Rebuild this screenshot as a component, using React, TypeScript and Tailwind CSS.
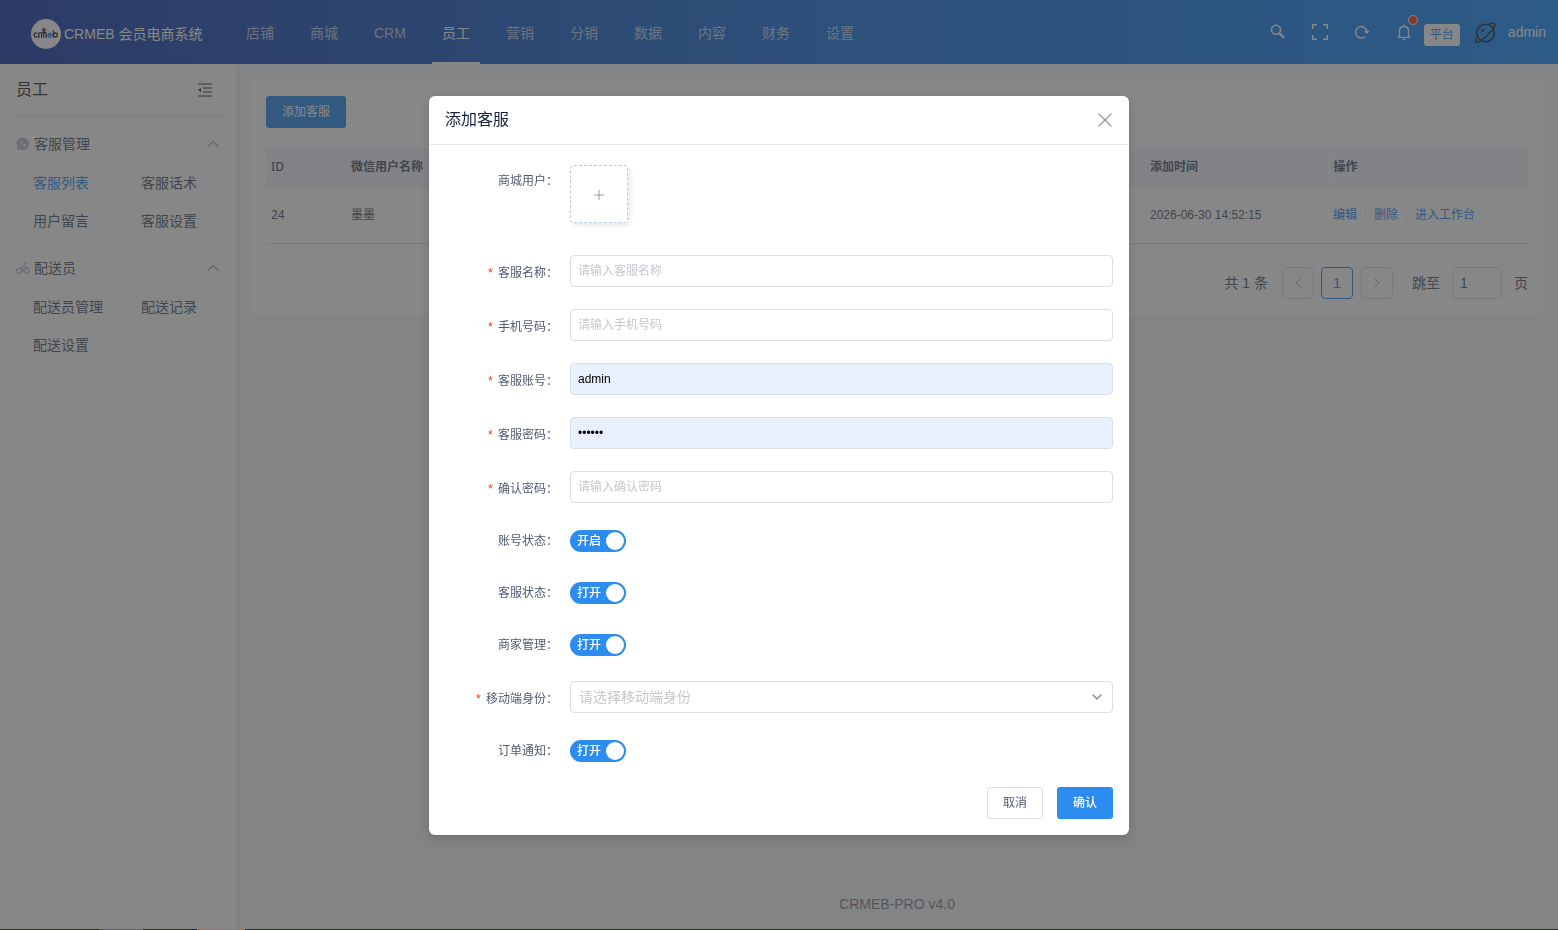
import React, { useState } from 'react';
import { ChevronDown, ChevronLeft, ChevronRight, ChevronUp, Plus, X } from 'lucide-react';

const navItems = ['店铺', '商城', 'CRM', '员工', '营销', '分销', '数据', '内容', '财务', '设置'];

const menuGroups = [
  { title: '客服管理', icon: 'phone', items: ['客服列表', '客服话术', '用户留言', '客服设置'] },
  { title: '配送员', icon: 'bike', items: ['配送员管理', '配送记录', '配送设置'] },
];

function Logo() {
  return (
    <svg width="30" height="30" viewBox="0 0 30 30" fill="none" strokeWidth="1.3" strokeLinecap="round">
      <circle cx="15" cy="15" r="15" fill="#fff" />
      <g stroke="#222">
        <path d="M6 14.2a2 2 0 1 0 0 3.4" />
        <path d="M7.8 18.4v-3.2c0-1.2.7-1.7 1.6-1.6" />
        <path d="M10.6 18.4v-3.6c0-1.8 2.2-1.8 2.2 0v3.6v-3.6c0-1.8 2.4-1.8 2.4 0v3.6" />
        <path d="M22.4 11.8v6.2" />
        <circle cx="24.4" cy="16" r="2" />
      </g>
      <circle cx="12.9" cy="11" r="1.2" stroke="#222" />
      <path d="M17 16h3.8a1.9 1.9 0 1 0-.7 1.7" stroke="#1890ff" strokeWidth="1.5" />
    </svg>
  );
}

function GroupIcon({ name }: { name: string }) {
  if (name === 'phone') {
    return (
      <svg width="14" height="14" viewBox="0 0 14 14">
        <path d="M7 .7A6.3 6.3 0 1 1 3.8 12.5L.8 13.3l.6-3.2A6.3 6.3 0 0 1 7 .7z" fill="#bdc1cc" />
        <path d="M5 4c-1.2 1.5 2.6 6 4.9 5.2l.3-1.3-1.5-.8-.8.7c-.9-.4-1.5-1.1-1.8-1.9l.6-.7L6 3.7z" fill="#fff" />
      </svg>
    );
  }
  return (
    <svg width="14" height="14" viewBox="0 0 14 14" fill="none" stroke="#bdc1cc" strokeWidth="1.2">
      <circle cx="3.3" cy="9.8" r="2.5" />
      <circle cx="10.7" cy="9.8" r="2.5" />
      <path d="M7 11V8.500L5 7l3-2.500L9.500 6.500H12" />
      <circle cx="9.5" cy="2.3" r=".8" fill="#bdc1cc" />
    </svg>
  );
}

function Header() {
  return (
    <header className="h-16 shrink-0 flex text-sm text-white/70 bg-[linear-gradient(90deg,#1d42ab,#2173dc,#1e93ff)]">
      <div className="w-[236px] shrink-0 flex items-center gap-[3px] pl-[31px] pt-1 text-sm text-white whitespace-nowrap">
        <Logo />
        <span>CRMEB 会员电商系统</span>
      </div>
      <nav className="flex gap-4">
        {navItems.map((item) => (
          <a
            key={item}
            href="#"
            className={
              item === '员工'
                ? 'h-16 px-2.5 leading-[66px] text-white border-b-2 border-white'
                : 'h-16 px-2.5 leading-[66px]'
            }
          >
            {item}
          </a>
        ))}
      </nav>
      <div className="ml-auto flex items-center pr-3 text-white">
        <div className="flex items-center gap-[26px]">
          <button aria-label="搜索">
            <svg width="16" height="16" viewBox="0 0 16 16" fill="none" stroke="currentColor">
              <circle cx="6" cy="5.8" r="4.5" strokeWidth="1.5" />
              <path d="M9.3 9.2l4.700 4.600" strokeWidth="2.2" />
            </svg>
          </button>
          <button aria-label="全屏">
            <svg width="16" height="16" viewBox="0 0 16 16" fill="none" stroke="currentColor" strokeWidth="1.5">
              <path d="M.8 5V.8H5M11 .8h4.200V5M15.200 11v4.200H11M5 15.200H.8V11" />
            </svg>
          </button>
          <button aria-label="刷新">
            <svg width="16" height="16" viewBox="0 0 16 16" fill="none" stroke="currentColor" strokeWidth="1.5">
              <path d="M11 12.600A5.700 5.700 0 1 1 12.900 7.500" />
              <path d="M9.800 6.800h6l-3 3.200z" fill="currentColor" stroke="none" />
            </svg>
          </button>
          <button aria-label="消息" className="relative">
            <svg width="16" height="18" viewBox="0 0 16 18" fill="none" stroke="currentColor" strokeWidth="1.3">
              <path d="M1.500 14.300h13M3.500 14V8c0-6 9-6 9 0v6M8 1.500v2M6.500 16.300h3" />
            </svg>
            <span className="absolute -top-2 left-3 size-2.5 rounded-full bg-[#ed4014] border border-white" />
          </button>
        </div>
        <span className="ml-3 mt-1.5 px-1.5 h-[22px] leading-[22px] rounded-[3px] bg-white text-xs text-[#2d8cf0]">平台</span>
        <svg className="ml-3.5 mr-3 mt-0.5" width="22" height="22" viewBox="0 0 22 22" fill="none" stroke="#222" strokeWidth="1.4">
          <circle cx="11.5" cy="11" r="8.8" />
          <path d="M3.500 14.500C-.5 21 2 22 7 18.500S24 4 20 1.500c-1.500-.8-3.500 0-5 .8" />
          <circle cx="8.5" cy="8.5" r=".6" fill="#222" />
        </svg>
        <span>admin</span>
      </div>
    </header>
  );
}

function Sidebar() {
  return (
    <aside className="w-[236px] shrink-0 bg-white px-4 text-sm text-[#515a6e] shadow-[2px_0_8px_rgba(29,35,41,0.05)]">
      <div className="h-[52px] -mr-[5px] flex items-center justify-between border-b border-[#e8eaec]">
        <h2 className="text-base text-[#303133]">员工</h2>
        <button aria-label="收起菜单" className="mr-3">
          <svg width="16" height="16" viewBox="0 0 16 16" fill="none" stroke="#333" strokeWidth="1.2">
            <path d="M1 2h14M6 6h9M6 10h9M1 14h14" />
            <path d="M1 8l3-2v4z" fill="#333" stroke="none" />
          </svg>
        </button>
      </div>
      <div className="pt-2">
        {menuGroups.map((group) => (
          <section key={group.title} className="mb-2">
            <div className="h-10 flex items-center gap-1">
              <GroupIcon name={group.icon} />
              <span>{group.title}</span>
              <ChevronUp className="ml-auto -mr-[3px] size-5 text-[#a8adb8]" strokeWidth={1.5} />
            </div>
            <div className="grid grid-cols-[108px_auto] pl-[17px]">
              {group.items.map((item) => (
                <a
                  key={item}
                  href="#"
                  className={item === '客服列表' ? 'leading-[38px] text-[#2d8cf0]' : 'leading-[38px]'}
                >
                  {item}
                </a>
              ))}
            </div>
          </section>
        ))}
      </div>
    </aside>
  );
}

function StaffTable() {
  return (
    <table className="w-full mt-5 table-fixed text-xs text-left text-[#515a6e]">
      <thead>
        <tr className="h-[38px] bg-[#f3f6ff] border-b border-[#e8eaec]">
          <th className="w-20 px-[5px] font-medium font-['Noto_Sans',sans-serif]">ID</th>
          <th className="px-[5px] font-semibold">微信用户名称</th>
          <th className="w-[183px] px-[5px] font-semibold border-r border-white">添加时间</th>
          <th className="w-[200px] px-[5px] font-semibold">操作</th>
        </tr>
      </thead>
      <tbody>
        <tr className="h-[57px] border-b border-[#dcdee2]">
          <td className="px-[5px] font-['Noto_Sans',sans-serif]">24</td>
          <td className="px-[5px]">墨墨</td>
          <td className="px-[5px]">2026-06-30 14:52:15</td>
          <td className="px-[5px]">
            <div className="flex items-center gap-2 text-[#2d8cf0]">
              <a href="#">编辑</a>
              <span className="w-px h-3 bg-[#e8eaec]" />
              <a href="#">删除</a>
              <span className="w-px h-3 bg-[#e8eaec]" />
              <a href="#">进入工作台</a>
            </div>
          </td>
        </tr>
      </tbody>
    </table>
  );
}

function Pagination() {
  return (
    <div className="mt-[23px] flex items-center justify-end text-sm text-[#515a6e]">
      <span>共 1 条</span>
      <button aria-label="上一页" className="ml-3.5 size-8 flex items-center justify-center border border-[#dcdee2] rounded">
        <ChevronLeft className="size-4 text-[#a8adb8]" strokeWidth={1.5} />
      </button>
      <button className="ml-[7px] size-8 border border-[#2d8cf0] rounded text-[#2d8cf0]">1</button>
      <button aria-label="下一页" className="ml-2 size-8 flex items-center justify-center border border-[#dcdee2] rounded">
        <ChevronRight className="size-4 text-[#a8adb8]" strokeWidth={1.5} />
      </button>
      <label htmlFor="page" className="ml-[19px]">跳至</label>
      <input id="page" defaultValue="1" className="mx-3 w-[50px] h-8 px-[7px] border border-[#dcdee2] rounded" />
      <span>页</span>
    </div>
  );
}

type RowProps = { id: string; label: string; required?: boolean; children: React.ReactNode };

function FormRow({ id, label, required, children }: RowProps) {
  return (
    <div className="flex mb-[22px]">
      <label htmlFor={id} className="w-[125px] shrink-0 pr-3 pt-2 text-right text-xs leading-5 text-[#515a6e]">
        {required && <span className="mr-1 font-['Liberation_Mono',monospace] text-[#ed4014]">*</span>}
        {label}：
      </label>
      <div className="flex-1 flex items-center">{children}</div>
    </div>
  );
}

function SwitchRow({ id, label, text }: { id: string; label: string; text: string }) {
  const [on, setOn] = useState(true);
  return (
    <div className="flex items-center h-[30px] mb-[22px]">
      <label htmlFor={id} className="w-[125px] shrink-0 pr-3 pt-0.5 text-right text-xs text-[#515a6e]">{label}：</label>
      <button
        id={id}
        type="button"
        role="switch"
        aria-checked={on}
        onClick={() => setOn(!on)}
        className="mt-0.5 w-14 h-[22px] pl-[7px] pr-0.5 flex items-center justify-between rounded-full bg-[#2d8cf0] text-xs text-white font-medium"
      >
        {text}
        <span className="size-[18px] rounded-full bg-white" />
      </button>
    </div>
  );
}

const inputClass = 'w-full h-8 px-[7px] pt-px border border-[#dcdee2] rounded text-xs placeholder:text-[#c5c8ce]';
const filledClass = 'w-full h-8 px-[7px] border border-[#dcdee2] rounded text-xs text-black bg-[#e8f0fe]';

function AddStaffModal() {
  return (
    <div className="fixed inset-0 z-10 flex items-center justify-center bg-[rgba(55,55,55,0.6)]">
      <div role="dialog" aria-labelledby="modal-title" className="w-[700px] bg-white rounded-md shadow-[0_4px_12px_rgba(0,0,0,0.15)]">
        <div className="h-[49px] px-4 pt-px flex items-center justify-between border-b border-[#e8eaec]">
          <h3 id="modal-title" className="text-base text-[#17233d]">添加客服</h3>
          <button aria-label="关闭" className="-mr-1">
            <X className="size-6 text-[#999]" strokeWidth={1.2} />
          </button>
        </div>
        <form className="p-4">
          <div className="flex h-[72px] mb-[22px]">
            <label htmlFor="user" className="w-[125px] shrink-0 pr-3 pt-2.5 text-right text-xs leading-5 text-[#515a6e]">
              商城用户：
            </label>
            <button
              id="user"
              type="button"
              className="mt-1 pt-0.5 size-[58px] flex items-center justify-center border border-dashed border-[#c0ccda] rounded shadow-[2px_2px_5px_rgba(0,0,0,0.1)]"
            >
              <Plus className="size-4 text-[#808695]" strokeWidth={1.2} />
            </button>
          </div>
          <FormRow id="name" label="客服名称" required>
            <input id="name" className={inputClass} placeholder="请输入客服名称" />
          </FormRow>
          <FormRow id="phone" label="手机号码" required>
            <input id="phone" className={inputClass} placeholder="请输入手机号码" />
          </FormRow>
          <FormRow id="account" label="客服账号" required>
            <input id="account" className={filledClass} defaultValue="admin" />
          </FormRow>
          <FormRow id="password" label="客服密码" required>
            <input id="password" type="password" className={filledClass} defaultValue="123456" />
          </FormRow>
          <FormRow id="confirm" label="确认密码" required>
            <input id="confirm" type="password" className={inputClass} placeholder="请输入确认密码" />
          </FormRow>
          <SwitchRow id="account-status" label="账号状态" text="开启" />
          <SwitchRow id="staff-status" label="客服状态" text="打开" />
          <SwitchRow id="merchant" label="商家管理" text="打开" />
          <FormRow id="role" label="移动端身份" required>
            <div className="relative w-full">
              <select id="role" className="w-full h-8 pl-2 pr-6 pt-px appearance-none border border-[#dcdee2] rounded text-sm text-[#c5c8ce]">
                <option>请选择移动端身份</option>
              </select>
              <ChevronDown className="absolute right-2 top-2 size-4 text-[#808695] pointer-events-none" />
            </div>
          </FormRow>
          <SwitchRow id="notice" label="订单通知" text="打开" />
          <div className="flex justify-end gap-3.5 text-xs">
            <button type="button" className="w-14 h-8 border border-[#dcdee2] rounded-[3px] text-[#515a6e]">取消</button>
            <button type="button" className="w-14 h-8 rounded-[3px] bg-[#2d8cf0] text-white font-medium">确认</button>
          </div>
        </form>
      </div>
    </div>
  );
}

// thin strip along the bottom edge of the window
function BottomStrip() {
  return (
    <div className="fixed inset-x-0 bottom-0 z-20 h-px flex bg-[#263022]">
      <span className="ml-[99px] w-11 bg-[#5c5c5c]" />
      <span className="ml-[54px] w-12 bg-[#b0702f]" />
    </div>
  );
}

function App() {
  return (
    <div lang="zh-CN" className="min-h-screen flex flex-col bg-[#f5f7f9] font-['Liberation_Sans','Noto_Sans_CJK_SC',sans-serif]">
      <Header />
      <div className="flex-1 flex">
        <Sidebar />
        <main className="flex-1 flex flex-col px-3.5 pt-4">
          <div className="p-4 bg-white rounded-md">
            <button className="h-8 px-4 rounded-[3px] bg-[#2d8cf0] text-xs text-white">添加客服</button>
            <StaffTable />
            <Pagination />
          </div>
          <footer className="mt-auto pb-4 text-center text-sm text-[#808695]">CRMEB-PRO v4.0</footer>
        </main>
      </div>
      <AddStaffModal />
      <BottomStrip />
    </div>
  );
}

export default App;
